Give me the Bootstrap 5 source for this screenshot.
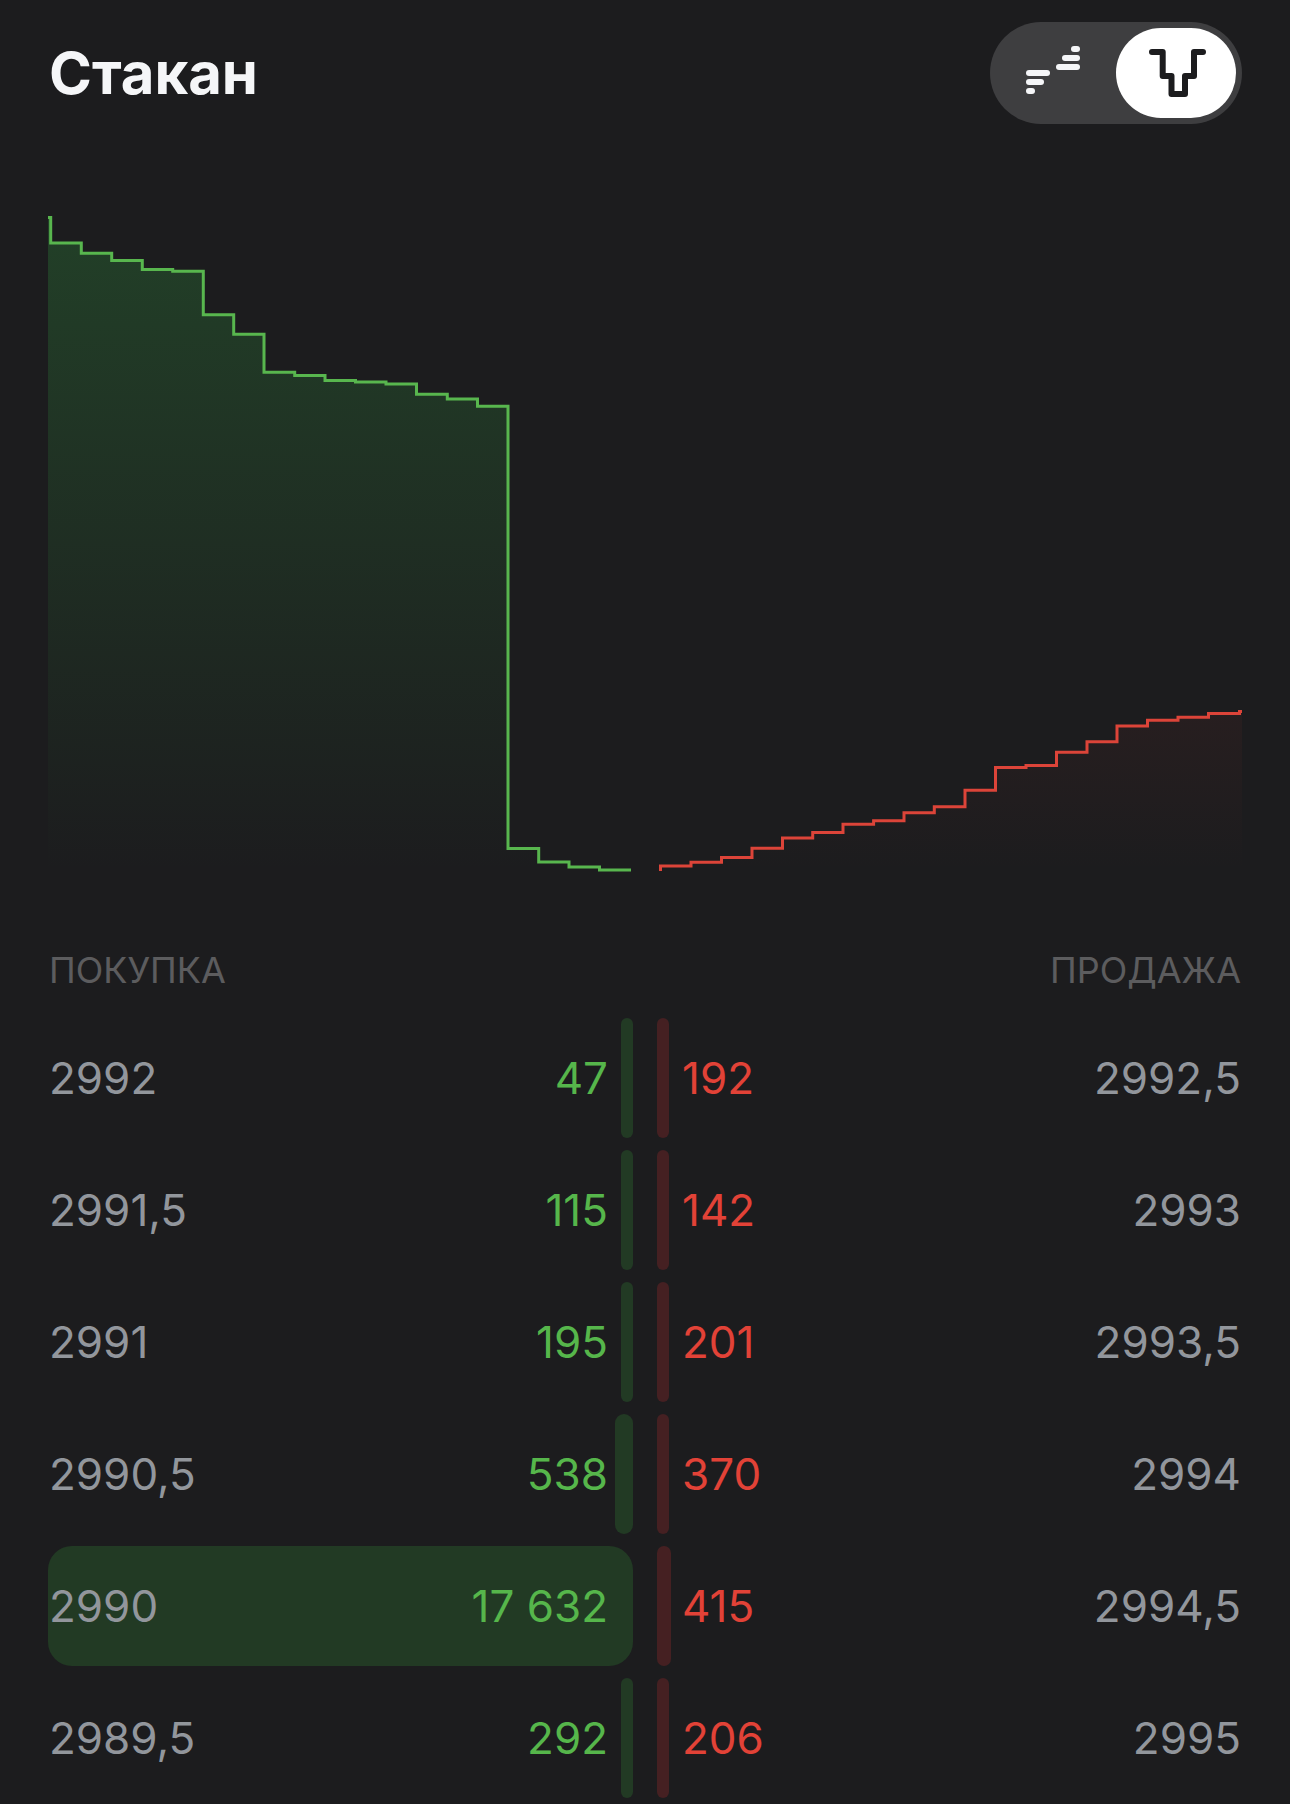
<!DOCTYPE html>
<html lang="ru" data-bs-theme="dark">
<head>
<meta charset="utf-8">
<meta name="viewport" content="width=device-width, initial-scale=1">
<title>Стакан</title>
<link href="https://cdn.jsdelivr.net/npm/bootstrap@5.3.0/dist/css/bootstrap.min.css" rel="stylesheet">
<style>
  :root { --buy: #56b64b; --sell: #e24237; --page: #1c1c1e; }
  body { background: var(--page); color: #f5f6f8; font-family: Inter, "Liberation Sans", sans-serif; }
  .book { padding: 22px 48px 0; }
  .book-title { font-size: 58px; line-height: 72px; font-weight: 700; padding: 0 1px; color: #f5f6f8; }
  .view-switch { background: #3e3e40; padding: 6px; }
  .view-switch label { width: 120px; height: 90px; color: #f5f6f8; cursor: pointer; }
  .view-switch .btn-check:checked + label { background: #fff; color: #1c1c1e; }
  .view-switch .btn-check:focus-visible + label { outline: 3px solid #8e9299; }
  .depth { margin: 92px 0 74px; }
  .orders { table-layout: fixed; }
  .orders th { font-size: 36px; line-height: 44px; font-weight: 400; color: #5c5c5e; padding: 0 1px 26px; }
  .orders td { padding: 0 12px 12px 0; }
  .orders td + td { padding: 0 0 12px 12px; }
  .order { height: 120px; font-size: 44px; line-height: 54px; color: #92969c; padding: 0 1px; }
  .order-bar { min-width: 12px; border-radius: 24px; }
  .buy .order-bar { background: #223a24; }
  .sell .order-bar { background: #452022; }
  .buy .amount { color: var(--buy); margin-right: 24px; }
  .sell .amount { color: var(--sell); margin-left: 24px; }
</style>
</head>
<body>
<main class="book">
  <header class="d-flex align-items-center justify-content-between">
    <h1 class="book-title mb-0">Стакан</h1>
    <div class="view-switch d-flex rounded-pill" role="radiogroup" aria-label="Вид стакана">
      <input class="btn-check" type="radio" name="view" id="view-list" aria-label="Список">
      <label class="d-flex align-items-center justify-content-center rounded-pill" for="view-list">
        <svg width="60" height="54" viewBox="0 0 60 54" fill="currentColor" aria-hidden="true">
          <rect x="45" y="0" width="9" height="6" rx="3"/><rect x="36" y="9" width="18" height="6" rx="3"/><rect x="30" y="18" width="24" height="6" rx="3"/>
          <rect x="0" y="24" width="24" height="6" rx="3"/><rect x="0" y="33" width="18" height="6" rx="3"/><rect x="0" y="42" width="9" height="6" rx="3"/>
        </svg>
      </label>
      <input class="btn-check" type="radio" name="view" id="view-depth" aria-label="Глубина" checked>
      <label class="d-flex align-items-center justify-content-center rounded-pill" for="view-depth">
        <svg width="60" height="54" viewBox="0 0 60 54" fill="none" stroke="currentColor" stroke-width="6" stroke-linecap="round" stroke-linejoin="round" aria-hidden="true">
          <path d="M6 6H16.700V30H25.500V48H39V30H48V6H57"/>
        </svg>
      </label>
    </div>
  </header>

  <svg class="depth d-block w-100 h-auto" viewBox="0 0 1194 658" role="img" aria-label="Глубина рынка">
    <defs>
      <linearGradient id="buy-fill" gradientUnits="userSpaceOnUse" x1="0" y1="0" x2="0" y2="656">
        <stop offset="0" stop-color="#36b848" stop-opacity=".23"/><stop offset="1" stop-color="#36b848" stop-opacity="0"/>
      </linearGradient>
      <linearGradient id="sell-fill" gradientUnits="userSpaceOnUse" x1="0" y1="0" x2="0" y2="656">
        <stop offset="0" stop-color="#e24237" stop-opacity=".23"/><stop offset="1" stop-color="#e24237" stop-opacity="0"/>
      </linearGradient>
    </defs>
    <path fill="url(#buy-fill)" d="M0 1.5H2.7V27H33.3V37.3H63.7V44.5H94.3V53.5H124.7V55.3H155.3V98.7H185.7V118.3H216V156.2H246.7V159.5H277V164.5H307.5V166H338V168H368.5V178.3H399.3V183H429.5V190.3H460V632.5H490.7V646H521V651H551.5V654H583V656H0Z"/>
    <path fill="none" stroke="#58b64e" stroke-width="3" d="M0 1.5H2.7V27H33.3V37.3H63.7V44.5H94.3V53.5H124.7V55.3H155.3V98.7H185.7V118.3H216V156.2H246.7V159.5H277V164.5H307.5V166H338V168H368.5V178.3H399.3V183H429.5V190.3H460V632.5H490.7V646H521V651H551.5V654H583"/>
    <path fill="url(#sell-fill)" d="M612.5 656V650H643V646.3H673.5V641.5H704V632.3H734.5V622H764.7V616.5H795V608.3H825.6V604.8H856V596.7H886.3V590.8H917V574.3H947.5V551.5H978V549.5H1008.5V536.3H1039V525.7H1069V510H1099.5V504.3H1130V501.3H1160.5V497.6H1191.5V495.5H1194V656Z"/>
    <path fill="none" stroke="#dc4439" stroke-width="3" d="M612.5 655V650H643V646.3H673.5V641.5H704V632.3H734.5V622H764.7V616.5H795V608.3H825.6V604.8H856V596.7H886.3V590.8H917V574.3H947.5V551.5H978V549.5H1008.5V536.3H1039V525.7H1069V510H1099.5V504.3H1130V501.3H1160.5V497.6H1191.5V495.5H1194"/>
  </svg>

  <table class="orders w-100">
    <thead>
      <tr><th scope="col" class="text-start">ПОКУПКА</th><th scope="col" class="text-end">ПРОДАЖА</th></tr>
    </thead>
    <tbody>
      <tr>
        <td class="buy"><div class="order position-relative d-flex align-items-center justify-content-between"><span class="order-bar position-absolute end-0 h-100" style="width:0%"></span><span class="position-relative">2992</span><span class="amount position-relative">47</span></div></td>
        <td class="sell"><div class="order position-relative d-flex align-items-center justify-content-between"><span class="order-bar position-absolute start-0 h-100" style="width:1%"></span><span class="amount position-relative">192</span><span class="position-relative">2992,5</span></div></td>
      </tr>
      <tr>
        <td class="buy"><div class="order position-relative d-flex align-items-center justify-content-between"><span class="order-bar position-absolute end-0 h-100" style="width:1%"></span><span class="position-relative">2991,5</span><span class="amount position-relative">115</span></div></td>
        <td class="sell"><div class="order position-relative d-flex align-items-center justify-content-between"><span class="order-bar position-absolute start-0 h-100" style="width:1%"></span><span class="amount position-relative">142</span><span class="position-relative">2993</span></div></td>
      </tr>
      <tr>
        <td class="buy"><div class="order position-relative d-flex align-items-center justify-content-between"><span class="order-bar position-absolute end-0 h-100" style="width:1%"></span><span class="position-relative">2991</span><span class="amount position-relative">195</span></div></td>
        <td class="sell"><div class="order position-relative d-flex align-items-center justify-content-between"><span class="order-bar position-absolute start-0 h-100" style="width:1%"></span><span class="amount position-relative">201</span><span class="position-relative">2993,5</span></div></td>
      </tr>
      <tr>
        <td class="buy"><div class="order position-relative d-flex align-items-center justify-content-between"><span class="order-bar position-absolute end-0 h-100" style="width:3.05%"></span><span class="position-relative">2990,5</span><span class="amount position-relative">538</span></div></td>
        <td class="sell"><div class="order position-relative d-flex align-items-center justify-content-between"><span class="order-bar position-absolute start-0 h-100" style="width:2%"></span><span class="amount position-relative">370</span><span class="position-relative">2994</span></div></td>
      </tr>
      <tr>
        <td class="buy"><div class="order position-relative d-flex align-items-center justify-content-between"><span class="order-bar position-absolute end-0 h-100" style="width:100%"></span><span class="position-relative">2990</span><span class="amount position-relative">17 632</span></div></td>
        <td class="sell"><div class="order position-relative d-flex align-items-center justify-content-between"><span class="order-bar position-absolute start-0 h-100" style="width:2.35%"></span><span class="amount position-relative">415</span><span class="position-relative">2994,5</span></div></td>
      </tr>
      <tr>
        <td class="buy"><div class="order position-relative d-flex align-items-center justify-content-between"><span class="order-bar position-absolute end-0 h-100" style="width:1.6%"></span><span class="position-relative">2989,5</span><span class="amount position-relative">292</span></div></td>
        <td class="sell"><div class="order position-relative d-flex align-items-center justify-content-between"><span class="order-bar position-absolute start-0 h-100" style="width:1%"></span><span class="amount position-relative">206</span><span class="position-relative">2995</span></div></td>
      </tr>
    </tbody>
  </table>
</main>
<script src="https://cdn.jsdelivr.net/npm/bootstrap@5.3.0/dist/js/bootstrap.bundle.min.js"></script>
</body>
</html>
